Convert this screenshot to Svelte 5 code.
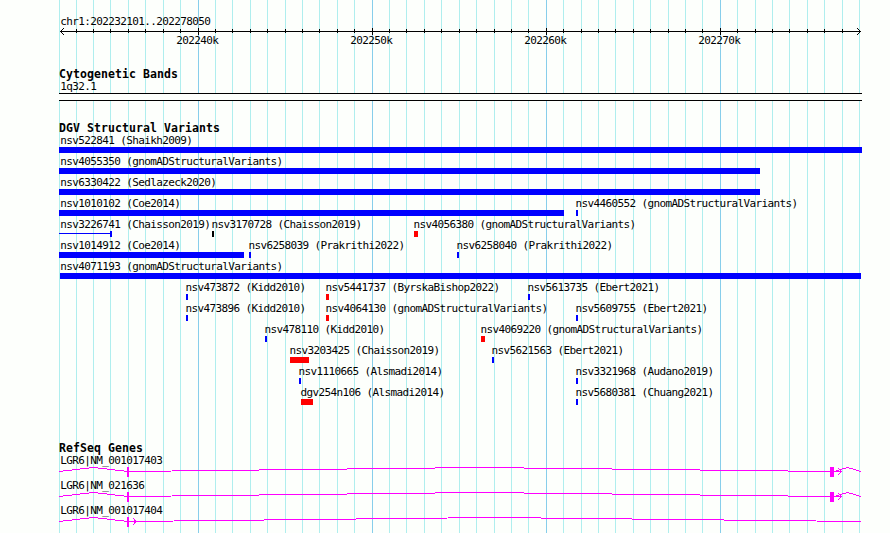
<script>
	const start = 202232101;
	const end = 202278050;
	const left = 60;
	const width = 890;

	// GENOME POSITION TO PANEL PIXEL
	const toX = (pos) => Math.max(59, Math.round(left + ((pos - start) * 800) / (end - start)));

	let ticks = [];
	for (let pos = 202232000; pos <= end; pos += 1000) {
		ticks.push({ x: toX(pos), major: pos % 10000 === 0, label: `${pos / 1000}k` });
	}

	// EACH FEATURE: NAME, X, WIDTH, COLOR
	const variants = [
		[['nsv522841 (Shaikh2009)', 59, 803, 'blue']],
		[['nsv4055350 (gnomADStructuralVariants)', 59, 701, 'blue']],
		[['nsv6330422 (Sedlazeck2020)', 59, 701, 'blue']],
		[['nsv1010102 (Coe2014)', 59, 505, 'blue'], ['nsv4460552 (gnomADStructuralVariants)', 576, 2, 'blue']],
		[
			['nsv3226741 (Chaisson2019)', 110, 2, 'blue', true],
			['nsv3170728 (Chaisson2019)', 212, 2, 'black'],
			['nsv4056380 (gnomADStructuralVariants)', 414, 4, 'red']
		],
		[
			['nsv1014912 (Coe2014)', 59, 185, 'blue'],
			['nsv6258039 (Prakrithi2022)', 249, 2, 'blue'],
			['nsv6258040 (Prakrithi2022)', 457, 2, 'blue']
		],
		[['nsv4071193 (gnomADStructuralVariants)', 60, 801, 'blue']],
		[
			['nsv473872 (Kidd2010)', 186, 2, 'blue'],
			['nsv5441737 (ByrskaBishop2022)', 326, 3, 'red'],
			['nsv5613735 (Ebert2021)', 528, 2, 'blue']
		],
		[
			['nsv473896 (Kidd2010)', 186, 2, 'blue'],
			['nsv4064130 (gnomADStructuralVariants)', 326, 3, 'red'],
			['nsv5609755 (Ebert2021)', 576, 2, 'blue']
		],
		[['nsv478110 (Kidd2010)', 265, 2, 'blue'], ['nsv4069220 (gnomADStructuralVariants)', 481, 4, 'red']],
		[['nsv3203425 (Chaisson2019)', 290, 19, 'red'], ['nsv5621563 (Ebert2021)', 492, 2, 'blue']],
		[['nsv1110665 (Alsmadi2014)', 299, 2, 'blue'], ['nsv3321968 (Audano2019)', 576, 2, 'blue']],
		[['dgv254n106 (Alsmadi2014)', 301, 12, 'red'], ['nsv5680381 (Chuang2021)', 576, 2, 'blue']]
	];

	const genes = [
		{ name: 'LGR6|NM_001017403', long: false },
		{ name: 'LGR6|NM_021636', long: false },
		{ name: 'LGR6|NM_001017404', long: true }
	];

	const labelX = (x, cut) => (cut ? 60.3 : Math.max(60.3, x - 0.6));
</script>

<main>
	<svg class="grid" {width} height="533">
		{#each ticks as tick}
			<rect x={tick.x} y="0" width="1" height="533" class={tick.major ? 'major' : 'minor'} />
		{/each}
	</svg>

	<svg class="ruler" {width} height="66">
		<text x="60.3" y="25">chr1:202232101..202278050</text>
		<rect x="60" y="31" width="801" height="1" />
		<path d="M64 28L60.5 31.5L64 35M857 28L860.5 31.5L857 35" />
		{#each ticks.slice(1, -1) as tick}
			{#if tick.major}
				<rect x={tick.x} y="28" width="1" height="7" />
				<text x={tick.x - 21.7} y="44">{tick.label}</text>
			{:else}
				<rect x={tick.x} y="29" width="1" height="4" />
			{/if}
		{/each}
	</svg>

	<section class="bands">
		<h2>Cytogenetic Bands</h2>
		<svg {width} height="41">
			<text x="60.3" y="11">1q32.1</text>
			<rect class="band" x="59" y="14" width="803" height="8" />
			<rect x="59" y="14" width="803" height="1" />
			<rect x="59" y="21" width="803" height="1" />
		</svg>
	</section>

	<section class="variants">
		<h2>DGV Structural Variants</h2>
		{#each variants as row}
			<svg {width} height="21">
				{#each row as [name, x, w, color, cut]}
					{#if cut}
						<rect x="59" y="16" width={x - 59} height="1" fill={color} />
					{/if}
					<rect {x} y="14" width={w} height="6" fill={color} />
					<text x={labelX(x, cut)} y="11">{name}</text>
				{/each}
			</svg>
		{/each}
	</section>

	<section class="genes">
		<h2>RefSeq Genes</h2>
		{#each genes as gene}
			<svg {width} height="25">
				<text x="60.3" y="11">{gene.name}</text>
				<polyline points="59,18.5 93.5,14.5 128,18.5" />
				<rect x="127" y="14" width="2" height="10" />
				{#if gene.long}
					<polyline points="128,18.5 494.5,14.5 861,18.5" />
					<polyline points="133,15 136,18.5 133,22" />
				{:else}
					<polyline points="128,18.5 480,14.5 831,18.5" />
					<rect x="830" y="14" width="4" height="10" />
					<polyline points="834,18.5 847.5,14.5 861,18.5" />
					<polyline points="834,18.5 842,18.5" />
					<polyline points="838,15 841.5,18.5 838,22" />
				{/if}
			</svg>
		{/each}
	</section>
</main>

<style>
	:global(body) {
		background: #fdfffc;
	}

	main {
		position: relative;
		width: 890px;
		height: 533px;
		overflow: hidden;
	}

	svg {
		display: block;
		position: relative;
		shape-rendering: crispEdges;
	}

	.grid {
		position: absolute;
		top: 0;
		left: 0;
	}

	.minor {
		fill: #afeeee;
	}

	.major {
		fill: #87ceeb;
	}

	text {
		font: 11px "DejaVu Sans Mono", monospace;
		letter-spacing: -0.62px;
		fill: #000;
		white-space: pre;
	}

	h2 {
		position: relative;
		margin: 0;
		padding-left: 59px;
		height: 13px;
		font: bold 11.5px/17px "DejaVu Sans Mono", monospace;
		letter-spacing: 0.08px;
		color: #000;
	}

	.ruler path {
		fill: none;
		stroke: #000;
	}

	.band {
		fill: #fdfffc;
	}

	.variants {
		margin-bottom: 34px;
	}

	.genes polyline {
		fill: none;
		stroke: #f0f;
	}

	.genes rect {
		fill: #f0f;
	}
</style>
